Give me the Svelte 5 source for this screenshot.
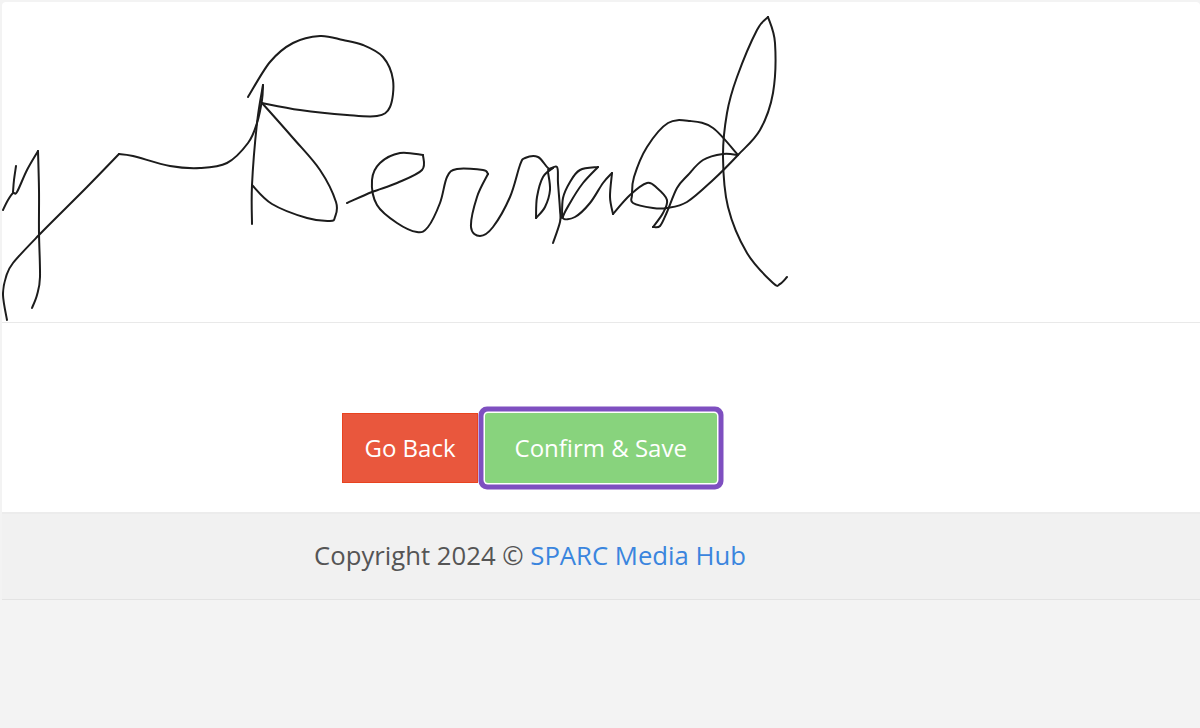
<script lang="ts">
  type Point = [number, number];

  // pen samples read off the signature, split at sharp corners
  const strokes: Point[][] = [
    [[3,210],[8,200],[13,193],[17,192],[27,170],[38,151]],
    [[38,151],[39,190],[39,233],[40,277],[37,295],[32,308]],
    [[16,166],[14,180],[13,192]],
    [[7,320],[3,295],[6,277],[13,263],[39,235],[87,187],[119,154]],
    [[119,154],[133,156],[170,166],[200,168],[227,163],[248,143],[257,123],[262,100],[263,85]],
    [[263,85],[257,123],[252,185],[252,224]],
    [[252,185],[272,204],[307,218],[330,221],[335,217],[336,202],[320,170],[293,138],[262,103]],
    [[262,103],[300,110],[347,115],[377,116],[390,107],[393,80],[383,57],[363,45],[343,40],[320,36],[293,43],[270,62],[248,97]],
    [[347,203],[372,192],[397,183],[422,170],[423,155]],
    [[423,155],[400,153],[380,163],[372,180],[377,205],[397,223],[417,232],[428,227],[440,203],[447,177],[457,169],[483,170],[488,174]],
    [[488,174],[477,197],[471,227],[480,236],[493,227],[510,197],[520,165],[525,158],[538,157],[548,168],[553,168]],
    [[553,168],[543,177],[537,197],[536,218]],
    [[536,218],[545,207],[550,190],[548,172]],
    [[548,170],[557,167],[558,183],[560,210],[560,222],[553,243]],
    [[598,167],[580,170],[570,182],[563,198],[562,218]],
    [[598,167],[583,183],[570,203],[563,218],[575,217],[590,203],[603,183],[612,173]],
    [[612,173],[610,197],[613,214]],
    [[613,214],[630,195],[647,183],[657,188],[667,200],[663,213],[653,227]],
    [[653,227],[660,226],[667,212],[677,188],[688,175],[703,160],[723,154],[738,155]],
    [[738,155],[713,128],[690,121],[668,123],[647,147],[634,177],[632,195],[633,203],[653,208],[667,208],[687,202],[713,180],[738,155],[760,130],[773,93],[775,43],[768,17]],
    [[768,17],[757,30],[737,77],[727,113],[723,157],[728,207],[747,253],[773,283],[780,284],[787,277]],
  ];

  // Catmull-Rom through the sampled pen points
  function toPath(pts: Point[]): string {
    let d = `M${pts[0][0]} ${pts[0][1]}`;
    for (let i = 0; i < pts.length - 1; i++) {
      const p0 = pts[Math.max(i - 1, 0)];
      const p1 = pts[i];
      const p2 = pts[i + 1];
      const p3 = pts[Math.min(i + 2, pts.length - 1)];
      const c1x = p1[0] + (p2[0] - p0[0]) / 6;
      const c1y = p1[1] + (p2[1] - p0[1]) / 6;
      const c2x = p2[0] - (p3[0] - p1[0]) / 6;
      const c2y = p2[1] - (p3[1] - p1[1]) / 6;
      d += `C${c1x.toFixed(1)} ${c1y.toFixed(1)} ${c2x.toFixed(1)} ${c2y.toFixed(1)} ${p2[0]} ${p2[1]}`;
    }
    return d;
  }
</script>

<div class="page">
  <main class="card">
    <div class="signature">
      <svg viewBox="0 0 1198 320" aria-label="Signature">
        <g transform="translate(-2 -2)">
          {#each strokes as stroke}
            <path d={toPath(stroke)} />
          {/each}
        </g>
      </svg>
    </div>
    <div class="actions">
      <button class="btn btn-back" type="button">Go Back</button>
      <button class="btn btn-save" type="button">Confirm &amp; Save</button>
    </div>
  </main>
  <footer class="footer">
    <p>Copyright 2024 © <a href="#top">SPARC Media Hub</a></p>
  </footer>
</div>

<style>
  :global(body) {
    margin: 0;
    background: #f3f3f3;
  }

  .page {
    height: 728px;
    box-sizing: border-box;
    padding: 2px 0 0 2px;
    background: #f3f3f3;
    font-family: "Open Sans", sans-serif;
    overflow: hidden;
  }

  .card {
    background: #fff;
    border-radius: 4px 4px 0 0;
    border-bottom: 2px solid #ececec;
  }

  .signature {
    height: 320px;
    border-bottom: 1px solid #e9e9e9;
  }

  .signature svg {
    display: block;
    width: 1198px;
    height: 320px;
    filter: blur(0.4px);
  }

  .signature path {
    fill: none;
    stroke: #1c1c1c;
    stroke-width: 2;
    stroke-linecap: round;
    stroke-linejoin: round;
  }

  .actions {
    display: flex;
    justify-content: center;
    width: 1055px;
    height: 189px;
    padding-top: 90px;
    box-sizing: border-box;
  }

  .btn {
    height: 70px;
    box-sizing: border-box;
    border: none;
    color: #fff;
    font-family: inherit;
    font-size: 24px;
    padding: 0 0 2px;
  }

  .btn-back {
    width: 136px;
    background: #e9573d;
    border: 1px solid #e8431f;
  }

  .btn-save {
    position: relative;
    width: 232.5px;
    margin-left: 6.5px;
    background: #88d37d;
    border-radius: 3px;
    box-shadow:
      0 0 0 1.5px #fff,
      0 0 0 6.5px #7e4fc0;
  }

  .footer {
    width: 1198px;
    height: 86px;
    box-sizing: border-box;
    background: #f1f1f1;
    border-bottom: 1px solid #e3e3e3;
  }

  .footer p {
    width: 1056px;
    margin: 0;
    padding-top: 25px;
    text-align: center;
    color: #555;
    font-size: 25.7px;
    line-height: 33px;
  }

  .footer a {
    color: #3a85de;
    text-decoration: none;
  }
</style>
